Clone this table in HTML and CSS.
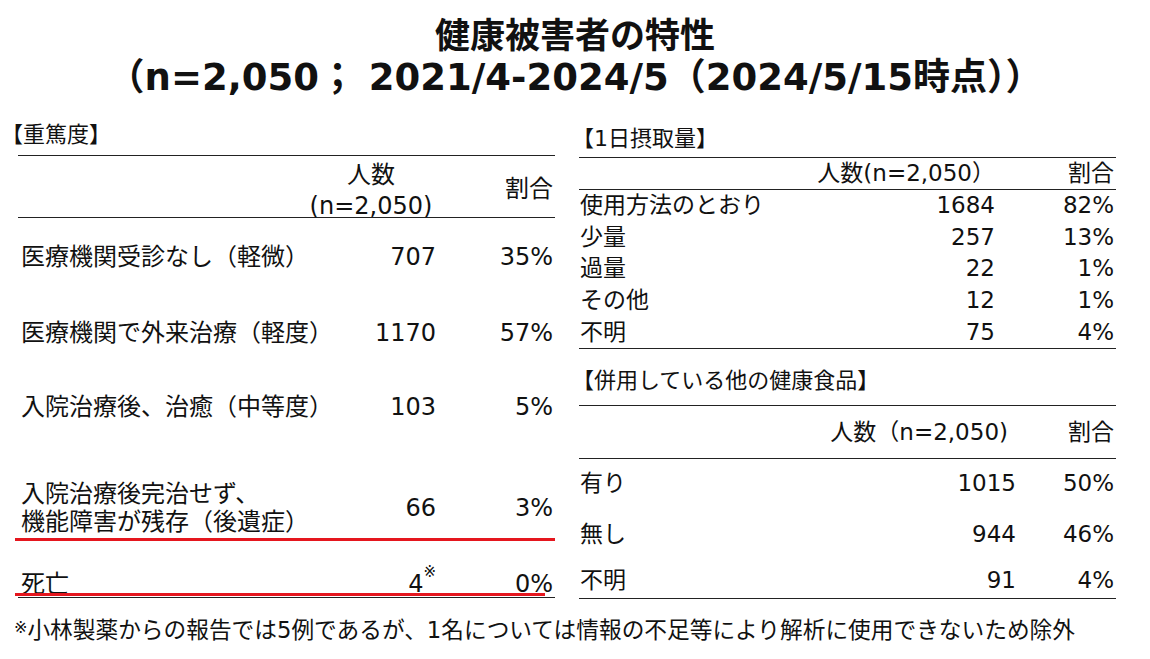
FILE: index.html
```html
<!DOCTYPE html>
<html lang="ja">
<head>
<meta charset="utf-8">
<title>健康被害者の特性</title>
<link rel="stylesheet" href="styles.css">
</head>
<body>
<header class="title">
  <h1><span class="t1">健康被害者の特性</span><span class="t2">（n=2,050； 2021/4-2024/5（2024/5/15時点））</span></h1>
</header>
<main class="cols">
  <section class="left">
    <div class="label label-left">【重篤度】</div>
    <div class="sev">
      <div class="row head">
        <div class="cell"></div>
        <div class="cell num headnum"><span>人数</span><span>(n=2,050)</span></div>
        <div class="cell pct">割合</div>
      </div>
      <div class="row r1">
        <div class="cell name">医療機関受診なし（軽微）</div>
        <div class="cell num">707</div>
        <div class="cell pct">35%</div>
      </div>
      <div class="row r2">
        <div class="cell name">医療機関で外来治療（軽度）</div>
        <div class="cell num">1170</div>
        <div class="cell pct">57%</div>
      </div>
      <div class="row r3">
        <div class="cell name">入院治療後、治癒（中等度）</div>
        <div class="cell num">103</div>
        <div class="cell pct">5%</div>
      </div>
      <div class="row r4">
        <div class="cell name two">入院治療後完治せず、<br>機能障害が残存（後遺症）</div>
        <div class="cell num mid">66</div>
        <div class="cell pct mid">3%</div>
      </div>
      <div class="row r5">
        <div class="cell name">死亡</div>
        <div class="cell num">4<span class="mark">※</span></div>
        <div class="cell pct">0%</div>
        <div class="redline"></div>
      </div>
    </div>
  </section>
  <section class="right">
    <div class="label label-r1">【1日摂取量】</div>
    <div class="intake">
      <div class="row head">
        <div class="cell"></div>
        <div class="cell num">人数(n=2,050）</div>
        <div class="cell pct">割合</div>
      </div>
      <div class="row"><div class="cell name">使用方法のとおり</div><div class="cell num">1684</div><div class="cell pct">82%</div></div>
      <div class="row"><div class="cell name">少量</div><div class="cell num">257</div><div class="cell pct">13%</div></div>
      <div class="row"><div class="cell name">過量</div><div class="cell num">22</div><div class="cell pct">1%</div></div>
      <div class="row"><div class="cell name">その他</div><div class="cell num">12</div><div class="cell pct">1%</div></div>
      <div class="row last"><div class="cell name">不明</div><div class="cell num">75</div><div class="cell pct">4%</div></div>
    </div>
    <div class="label label-r2">【併用している他の健康食品】</div>
    <div class="combo">
      <div class="row head">
        <div class="cell"></div>
        <div class="cell num headnum2">人数（n=2,050)</div>
        <div class="cell pct">割合</div>
      </div>
      <div class="row c1"><div class="cell name">有り</div><div class="cell num">1015</div><div class="cell pct">50%</div></div>
      <div class="row c2"><div class="cell name">無し</div><div class="cell num">944</div><div class="cell pct">46%</div></div>
      <div class="row c3"><div class="cell name">不明</div><div class="cell num">91</div><div class="cell pct">4%</div></div>
    </div>
  </section>
  <p class="note"><span class="mark2">※</span>小林製薬からの報告では5例であるが、1名については情報の不足等により解析に使用できないため除外</p>
</main>
</body>
</html>
```

FILE: styles.css
```css
* {
  box-sizing: border-box;
  margin: 0;
  padding: 0;
}

html, body {
  width: 1150px;
  height: 659px;
  overflow: hidden;
  background: #ffffff;
}

body {
  color: #111111;
  font-family: "DejaVu Sans", "Noto Sans CJK JP", sans-serif;
}

.title {
  text-align: center;
  padding-top: 16px;
}

.title h1 {
  font-weight: 700;
  line-height: 41px;
}

.title h1 span {
  display: block;
}

.title .t1 {
  font-size: 35px;
}

.title .t2 {
  font-size: 37px;
}

.cols {
  display: grid;
  grid-template-columns: 560px 590px;
  margin-top: 1px;
}

.label {
  display: flex;
  align-items: flex-end;
  line-height: 28px;
}

.label-left {
  font-size: 22px;
  height: 56px;
  padding-bottom: 6px;
  margin-left: 1px;
}

.label-r1 {
  font-size: 22px;
  height: 58px;
  padding-bottom: 4px;
  margin-left: 12px;
}

.label-r2 {
  font-size: 22px;
  height: 56px;
  padding-bottom: 10px;
  margin-left: 12px;
}

.row {
  display: grid;
  align-items: center;
  white-space: nowrap;
}

.cell {
  min-width: 0;
}

.cell.num,
.cell.pct {
  display: flex;
  justify-content: flex-end;
}

/* ---- severity table (left) ---- */
.sev {
  margin-left: 18px;
  width: 537px;
  border-top: 1.5px solid #222;
  font-size: 24px;
  line-height: 30px;
}

.sev .row {
  grid-template-columns: minmax(0, 1fr) 130px 119px;
}

.sev .name {
  padding-left: 3px;
}

.sev .pct {
  padding-right: 2px;
}

.sev .head {
  height: 62px;
  border-bottom: 1.5px solid #222;
}

.sev .headnum {
  flex-direction: column;
  align-items: center;
  line-height: 31px;
  padding-top: 4px;
}

.sev .r1 { height: 78px; }
.sev .r2 { height: 74px; }
.sev .r3 { height: 74px; }

.sev .r4 {
  position: relative;
  height: 96px;
  align-items: end;
  border-bottom: 1.5px solid #222;
}

.sev .r4 .two {
  line-height: 28px;
  padding-bottom: 3px;
}

.sev .r4 .mid {
  padding-bottom: 16px;
}

.sev .r5 {
  position: relative;
  height: 58px;
  align-items: end;
  line-height: 26px;
  border-bottom: 1.5px solid #222;
}

.mark {
  font-size: 15px;
  line-height: 1;
  align-self: flex-start;
  margin-top: -6px;
}

.redline {
  position: absolute;
  left: -3px;
  width: 530px;
  bottom: 1px;
  height: 3px;
  background: #e5161e;
}

.sev .r4::after {
  content: "";
  position: absolute;
  left: -3px;
  right: 0;
  bottom: -2px;
  height: 3px;
  background: #e5161e;
}

/* ---- intake table (right top) ---- */
.intake,
.combo {
  margin-left: 19px;
  width: 537px;
  border-top: 1.5px solid #222;
  font-size: 23px;
}

.intake .row {
  grid-template-columns: minmax(0, 1fr) 200px 121px;
  height: 31.5px;
  line-height: 31px;
}

.intake .head {
  height: 32px;
  border-bottom: 1.5px solid #222;
}

.intake .last {
  height: 33px;
  border-bottom: 1.5px solid #222;
}

.intake .name,
.combo .name {
  padding-left: 1px;
}

.intake .pct,
.combo .pct {
  padding-right: 2px;
}

/* ---- combined products table (right bottom) ---- */
.combo .row {
  grid-template-columns: minmax(0, 1fr) 200px 100px;
  line-height: 31px;
}

.combo .head {
  height: 53px;
  border-bottom: 1.5px solid #222;
}

.combo .headnum2 {
  padding-right: 8px;
}

.combo .c1 { height: 48px; }
.combo .c2 { height: 54px; }
.combo .c3 {
  height: 38px;
  border-bottom: 1.5px solid #222;
  padding-top: 2px;
}

/* ---- footnote ---- */
.note {
  grid-column: 1 / span 2;
  margin-left: 14px;
  margin-top: 14px;
  font-size: 22.7px;
  line-height: 30px;
  white-space: nowrap;
}

.mark2 {
  font-size: 16px;
  vertical-align: 5px;
}
```
